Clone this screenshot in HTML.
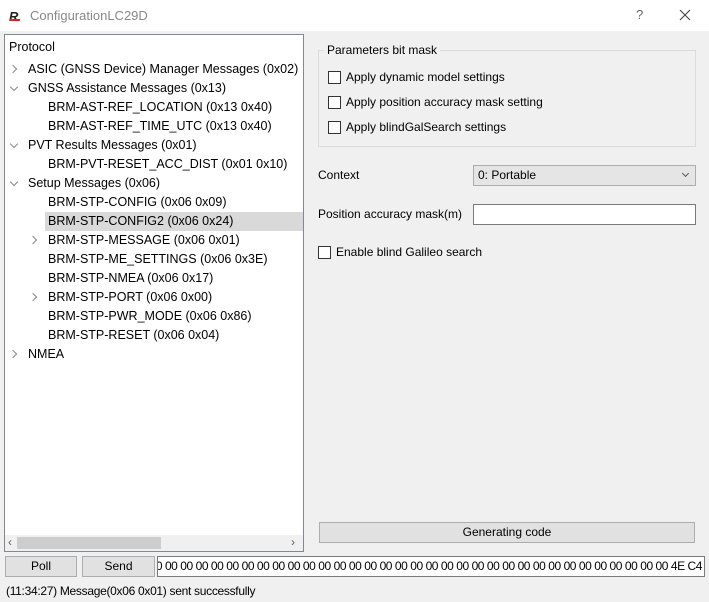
<!DOCTYPE html>
<html><head><style>
*{margin:0;padding:0;box-sizing:border-box}
body{width:709px;height:602px;background:#f0f0f0;font-family:"Liberation Sans",sans-serif;position:relative;overflow:hidden;color:#000}
.a{position:absolute;white-space:nowrap}
.t{font-size:12.5px;line-height:19px}
.r{font-size:12px}
.cb{position:absolute;width:13px;height:13px;border:1px solid #333;background:#fff}
.btn{position:absolute;background:#e1e1e1;border:1px solid #adadad;font-size:12px;text-align:center;line-height:19px}
.chev{position:absolute;width:6px;height:6px;border-right:1.3px solid #888;border-bottom:1.3px solid #888}
.right{transform:rotate(-45deg)}
.down{transform:rotate(45deg)}
</style></head><body>
<div class="a" style="left:0;top:0;width:709px;height:31px;background:#fff"></div>
<div class="a" style="left:9px;top:9px;font-size:13px;font-weight:bold;font-style:italic;color:#222">R</div>
<div class="a" style="left:10px;top:19px;width:10px;height:2px;background:#d22"></div>
<div class="a" style="left:30px;top:8px;font-size:13px;color:#888">ConfigurationLC29D</div>
<div class="a" style="left:636px;top:7px;font-size:13px;color:#666">?</div>
<svg class="a" style="left:679px;top:9px" width="12" height="12"><path d="M1 1L11 11M11 1L1 11" stroke="#444" stroke-width="1.1"/></svg>

<div class="a" style="left:4px;top:34px;width:300px;height:518px;background:#fff;border:1px solid #828790"></div>
<div class="a" style="left:45px;top:212px;width:258px;height:19px;background:#d9d9d9"></div>
<div class="a t" style="left:9px;top:38px">Protocol</div>
<div class="chev right" style="left:10px;top:66px"></div>
<div class="a t" style="left:28px;top:60px">ASIC (GNSS Device) Manager Messages (0x02)</div>
<div class="chev down" style="left:11px;top:84px"></div>
<div class="a t" style="left:28px;top:79px">GNSS Assistance Messages (0x13)</div>
<div class="a t" style="left:48px;top:98px">BRM-AST-REF_LOCATION (0x13 0x40)</div>
<div class="a t" style="left:48px;top:117px">BRM-AST-REF_TIME_UTC (0x13 0x40)</div>
<div class="chev down" style="left:11px;top:141px"></div>
<div class="a t" style="left:28px;top:136px">PVT Results Messages (0x01)</div>
<div class="a t" style="left:48px;top:155px">BRM-PVT-RESET_ACC_DIST (0x01 0x10)</div>
<div class="chev down" style="left:11px;top:179px"></div>
<div class="a t" style="left:28px;top:174px">Setup Messages (0x06)</div>
<div class="a t" style="left:48px;top:193px">BRM-STP-CONFIG (0x06 0x09)</div>
<div class="a t" style="left:48px;top:212px">BRM-STP-CONFIG2 (0x06 0x24)</div>
<div class="chev right" style="left:30px;top:237px"></div>
<div class="a t" style="left:48px;top:231px">BRM-STP-MESSAGE (0x06 0x01)</div>
<div class="a t" style="left:48px;top:250px">BRM-STP-ME_SETTINGS (0x06 0x3E)</div>
<div class="a t" style="left:48px;top:269px">BRM-STP-NMEA (0x06 0x17)</div>
<div class="chev right" style="left:30px;top:294px"></div>
<div class="a t" style="left:48px;top:288px">BRM-STP-PORT (0x06 0x00)</div>
<div class="a t" style="left:48px;top:307px">BRM-STP-PWR_MODE (0x06 0x86)</div>
<div class="a t" style="left:48px;top:326px">BRM-STP-RESET (0x06 0x04)</div>
<div class="chev right" style="left:10px;top:351px"></div>
<div class="a t" style="left:28px;top:345px">NMEA</div>
<div class="a" style="left:5px;top:535px;width:298px;height:16px;background:#f0f0f0"></div>
<div class="a" style="left:17px;top:537px;width:144px;height:12px;background:#cdcdcd"></div>
<div class="a" style="left:8px;top:535px;font-size:12px;color:#606060">‹</div>
<div class="a" style="left:291px;top:535px;font-size:12px;color:#606060">›</div>

<div class="a" style="left:318px;top:50px;width:378px;height:97px;border:1px solid #dcdcdc"></div>
<div class="a r" style="left:324px;top:43px;background:#f0f0f0;padding:0 3px">Parameters bit mask</div>
<div class="cb" style="left:328px;top:71px"></div><div class="a r" style="left:346px;top:70px">Apply dynamic model settings</div>
<div class="cb" style="left:328px;top:96px"></div><div class="a r" style="left:346px;top:95px">Apply position accuracy mask setting</div>
<div class="cb" style="left:328px;top:121px"></div><div class="a r" style="left:346px;top:120px">Apply blindGalSearch settings</div>
<div class="a r" style="left:318px;top:168px">Context</div>
<div class="a" style="left:473px;top:165px;width:223px;height:21px;background:#e5e5e5;border:1px solid #adadad"></div>
<div class="a r" style="left:478px;top:168px">0: Portable</div>
<div class="chev down" style="left:683px;top:171px;width:5px;height:5px;border-color:#555"></div>
<div class="a r" style="left:318px;top:207px">Position accuracy mask(m)</div>
<div class="a" style="left:473px;top:204px;width:223px;height:21px;background:#fff;border:1px solid #7a7a7a"></div>
<div class="cb" style="left:318px;top:246px"></div><div class="a r" style="left:336px;top:245px">Enable blind Galileo search</div>
<div class="btn" style="left:319px;top:522px;width:376px;height:21px">Generating code</div>

<div class="btn" style="left:5px;top:556px;width:72px;height:21px">Poll</div>
<div class="btn" style="left:82px;top:556px;width:73px;height:21px">Send</div>
<div class="a" style="left:157px;top:556px;width:548px;height:21px;background:#fff;border:1px solid #7a7a7a;overflow:hidden">
<div class="a" style="right:2px;top:0;font-size:12px;line-height:19px;letter-spacing:-0.45px">00 00 00 00 00 00 00 00 00 00 00 00 00 00 00 00 00 00 00 00 00 00 00 00 00 00 00 00 00 00 00 00 00 00 00 00 00 00 00 00 00 00 00 4E C4</div></div>
<div class="a r" style="left:6px;top:584px;letter-spacing:-0.3px">(11:34:27) Message(0x06 0x01) sent successfully</div>
</body></html>
